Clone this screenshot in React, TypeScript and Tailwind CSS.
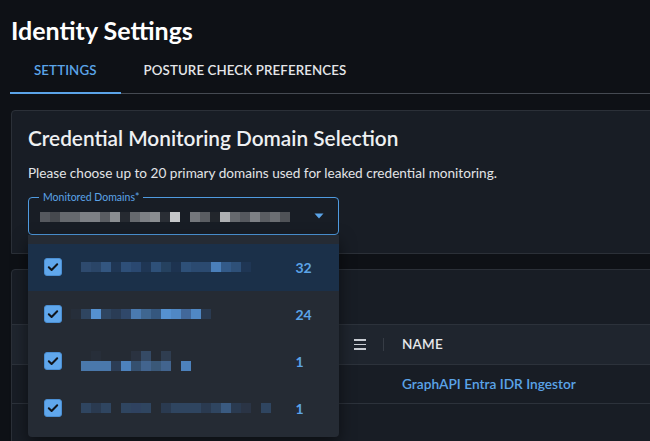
import React from 'react'

type Cell = string | null

const selectedBlocks: Cell[] = ['#55585e', '#46494e', '#66696e', '#66696e', '#7d8085', '#7d8085', '#5a5d62', '#8a8d91', '#262a31', '#66696e', '#7d8085', '#8a8d91', '#2a2e35', '#c5c7ca', null, '#74777c', '#5a5d62', '#22262c', '#aeb0b3', '#66696e', '#55585e', '#7d8085', '#5a5d62', '#6b6e73', '#4f5257']

const options: { rows: Cell[][]; offset: number; count: string; active?: boolean }[] = [
  {
    rows: [['#2e4a6e', '#2a4567', '#335680', '#1f3654', '#2e4f78', '#2a4870', '#1f3654', '#2e5078', '#25415f', '#1d3350', '#2e5078', '#2b4a70', '#2b4a70', '#4a7fba', '#335a88', '#2e5078', '#1f3654']],
    offset: 0,
    count: '32',
    active: true,
  },
  {
    rows: [['#262e3a', '#2f4560', '#5591d0', '#2f4560', '#2a3c55', '#30486a', '#4a7ab0', '#3f6690', '#35577e', '#5591d0', '#5088c4', '#42689a', '#5088c4', '#2a3a50']],
    offset: -10,
    count: '24',
  },
  {
    rows: [
      [null, '#272e39', null, null, null, '#2a3240', '#354a65', null, '#2f3d50'],
      ['#4a78ab', '#4a78ab', '#4a78ab', '#2c3d55', '#4d82bd', '#35506f', '#42648e', '#3a5878', '#42648e', null, '#4d82bd'],
    ],
    offset: 0,
    count: '1',
  },
  {
    rows: [['#2f4560', '#2a3a50', '#2f4560', null, '#2f4560', '#2f4260', '#2f4560', null, '#2a3a50', '#2f4560', '#2f4560', '#2f4560', '#2a3a50', '#2f4560', '#3a5a80', '#2a3a50', '#2a3445', null, '#2f4560']],
    offset: 0,
    count: '1',
  },
]

const BlockRow = ({ cells }: { cells: Cell[] }) => (
  <div className="flex h-[10px]">
    {cells.map((c, i) => (
      <div key={i} className="w-[10px] h-[10px]" style={{ backgroundColor: c ?? 'transparent' }} />
    ))}
  </div>
)

const Check = () => (
  <div className="w-[18px] h-[18px] rounded-[3px] bg-[#60a7ec] border border-[#4b8fd3] flex items-center justify-center shrink-0">
    <svg width="14" height="14" viewBox="0 0 14 14" fill="none">
      <path d="M2.8 7.2l2.8 2.8 5.6-5.8" stroke="#11151b" strokeWidth="2" strokeLinecap="round" strokeLinejoin="round" />
    </svg>
  </div>
)

export default function App() {
  return (
    <div className="w-[650px] h-[441px] overflow-hidden bg-[#0e1116] text-white" style={{ fontFamily: 'Lato, "Open Sans", sans-serif' }}>
      <div className="w-[720px] pl-[11px] pt-[16px]">
        <h1 className="text-[25px] leading-[29px] font-bold text-white">Identity Settings</h1>

        {/* tabs */}
        <div className="flex border-b border-[#454a52] h-[49px] -ml-px">
          <div className="relative px-6 pt-[3px] flex items-center text-[13.3px] font-semibold text-[#5ba4e8] tracking-[0.1px]">
            SETTINGS
            <div className="absolute left-0 right-0 -bottom-px h-[2px] bg-[#5ba4e8]" />
          </div>
          <div className="px-[23px] pt-[3px] flex items-center text-[13.3px] font-semibold text-[#e4e6e9] tracking-[0.1px]">
            POSTURE CHECK PREFERENCES
          </div>
        </div>

        {/* card 1 */}
        <div className="relative mt-[16px] bg-[#181d25] border border-[#2b3038] rounded-tl-[4px] pl-[16px] pt-[15px] pb-[18px]">
          <h2 className="text-[20.8px] leading-[24px] font-semibold text-[#eef0f2]">Credential Monitoring Domain Selection</h2>
          <p className="mt-[14px] text-[13.6px] leading-[18px] text-[#e2e4e7]">
            Please choose up to 20 primary domains used for leaked credential monitoring.
          </p>

          <div className="relative mt-[15px] w-[311px] h-[38px] border-[1.5px] border-[#4f9be0] rounded-[4px] flex items-center pl-[11px] pr-[14px]">
            <span className="absolute -top-[8px] left-[10px] px-[4px] bg-[#181d25] text-[10.5px] leading-[14px] text-[#5ba4e8]">
              Monitored Domains*
            </span>
            <div className="flex-1 pt-[1px]">
              <BlockRow cells={selectedBlocks} />
            </div>
            <svg width="10" height="6" viewBox="0 0 10 6">
              <path d="M0.5 0.5h9L5 5.5z" fill="#5ba4e8" />
            </svg>

            {/* dropdown menu */}
            <div className="absolute z-10 left-[-1.5px] top-[36.5px] w-[311px] h-[202px] bg-[#252b34] rounded-b-[4px] pt-[9px] shadow-[0_6px_16px_rgba(0,0,0,0.5)]">
              {options.map((o, i) => (
                <div
                  key={i}
                  className={`h-[47px] flex items-center pl-[16px] ${o.active ? 'bg-[#1b3049]' : ''}`}
                >
                  <Check />
                  <div className="w-[234px] pl-[19px] flex flex-col">
                    <div className="flex flex-col" style={{ marginLeft: o.offset }}>
                      {o.rows.map((r, j) => (
                        <BlockRow key={j} cells={r} />
                      ))}
                    </div>
                  </div>
                  <span className="text-[14px] font-bold text-[#5ba4e8]">{o.count}</span>
                </div>
              ))}
            </div>
          </div>
        </div>

        {/* card 2 */}
        <div className="mt-[15px] h-[200px] bg-[#181d25] border border-[#2b3038] rounded-tl-[4px]">
          <div className="h-[54px]" />
          <div className="h-[41px] bg-[#1f252e] border-t border-b border-[#2c323b] flex items-center">
            <div className="w-[342px]" />
            <div className="w-[12px] flex flex-col gap-[3px]">
              <div className="h-[1.5px] bg-[#c9cdd3]" />
              <div className="h-[1.5px] bg-[#c9cdd3]" />
              <div className="h-[1.5px] bg-[#c9cdd3]" />
            </div>
            <div className="ml-[17px] w-px h-[13px] bg-[#363c45]" />
            <span className="ml-[18px] text-[13.5px] font-semibold text-[#e6e8eb] tracking-[0.2px]">NAME</span>
          </div>
          <div className="h-[39px] border-b border-[#2c323b] flex items-center">
            <div className="w-[390px]" />
            <span className="text-[13.7px] font-semibold text-[#5ba4e8]">GraphAPI Entra IDR Ingestor</span>
          </div>
        </div>
      </div>
    </div>
  )
}
